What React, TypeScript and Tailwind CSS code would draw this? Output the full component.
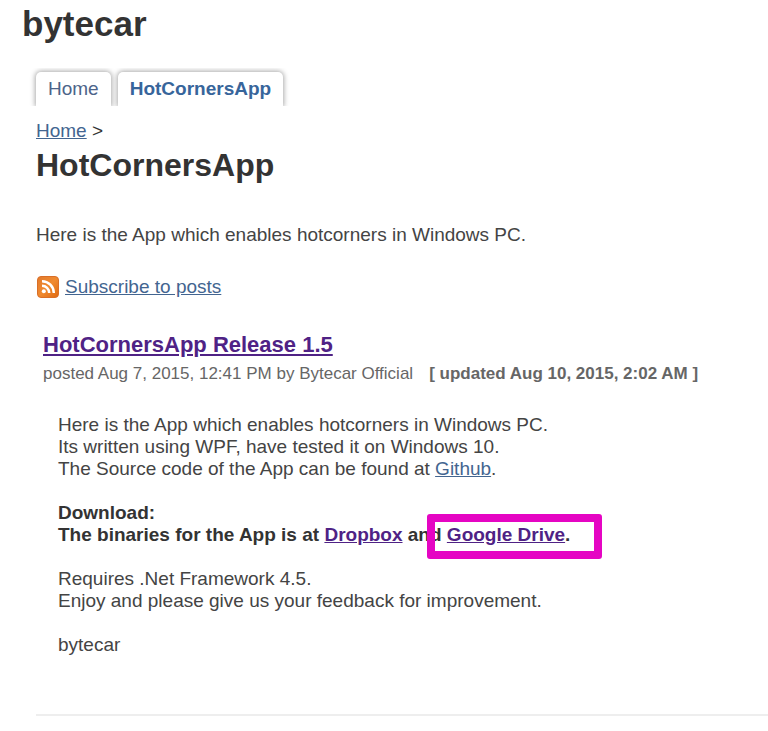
/**
 * Site page for HotCornersApp: site title, tabs, breadcrumb and the announcement post.
 */

import type { ReactNode } from 'react';

interface TextLinkProps {
  href: string;
  visited?: boolean;
  children: ReactNode;
}

function TextLink({ href, visited = false, children }: TextLinkProps) {
  return (
    <a
      href={href}
      className={visited ? 'text-[#4f2285] underline' : 'text-[#436590] underline'}
    >
      {children}
    </a>
  );
}

interface TabProps {
  href: string;
  active?: boolean;
  children: ReactNode;
}

function Tab({ href, active = false, children }: TabProps) {
  return (
    <li>
      <a
        href={href}
        aria-current={active ? 'page' : undefined}
        className={`block h-[34px] rounded-t-[5px] bg-white px-3 pt-[5px] leading-6 shadow-[0_0_5px_1px_#aaa] ${
          active ? 'font-bold text-[#37659b]' : 'text-[#4d6489]'
        }`}
      >
        {children}
      </a>
    </li>
  );
}

function FeedIcon() {
  return (
    <svg viewBox="0 0 22 22" className="h-[22px] w-[22px] shrink-0" aria-hidden="true">
      <defs>
        <linearGradient id="feed" x1="0" y1="0" x2="1" y2="1">
          <stop offset="0" stopColor="#e27a2c" />
          <stop offset="0.5" stopColor="#f08a30" />
          <stop offset="1" stopColor="#e0690f" />
        </linearGradient>
      </defs>
      <rect x="0.5" y="0.5" width="21" height="21" rx="3.5" fill="url(#feed)" stroke="#d96f28" />
      <circle cx="6.8" cy="15.2" r="2" fill="#fff" />
      <path
        d="M5 9.8a7.2 7.2 0 0 1 7.2 7.2M5 5.2A11.8 11.8 0 0 1 16.8 17"
        fill="none"
        stroke="#fff"
        strokeWidth="2.5"
      />
    </svg>
  );
}

function Post() {
  return (
    <article className="px-[7px]">
      <h2 className="text-[22px] leading-7 font-bold">
        <TextLink href="#release" visited>
          HotCornersApp Release 1.5
        </TextLink>
      </h2>
      <p className="mt-[3px] flex flex-wrap gap-x-4 text-[17px] leading-6 text-[#666]">
        <span>posted Aug 7, 2015, 12:41 PM by Bytecar Official</span>
        <strong>[ updated Aug 10, 2015, 2:02 AM ]</strong>
      </p>

      <div className="mt-7 space-y-[22px] pl-[15px]">
        <p>
          Here is the App which enables hotcorners in Windows PC.
          <br />
          Its written using WPF, have tested it on Windows 10.
          <br />
          The Source code of the App can be found at <TextLink href="#github">Github</TextLink>.
        </p>
        <p className="font-bold text-[#333]">
          Download:
          <br />
          The binaries for the App is at{' '}
          <TextLink href="#dropbox" visited>
            Dropbox
          </TextLink>{' '}
          and{' '}
          <span className="relative inline-block">
            <TextLink href="#drive" visited>
              Google Drive
            </TextLink>
            .
            <span className="pointer-events-none absolute -top-[10px] -right-8 -bottom-[13px] -left-5 rounded-[3px] border-8 border-[#e505c3]" />
          </span>
        </p>
        <p>
          Requires .Net Framework 4.5.
          <br />
          Enjoy and please give us your feedback for improvement.
        </p>
        <p>bytecar</p>
      </div>
    </article>
  );
}

export default function App() {
  return (
    <div className="min-h-screen bg-white font-['Liberation_Sans',Arial,sans-serif] text-[19px] leading-[22px] text-[#444]">
      <header className="px-[22px] pt-1">
        <div className="text-[35px] leading-10 font-bold text-[#333]">bytecar</div>
      </header>

      <nav className="mt-6 overflow-hidden pl-9">
        <ul className="flex gap-[7px] pt-1">
          <Tab href="#home">Home</Tab>
          <Tab href="#hotcorners" active>
            HotCornersApp
          </Tab>
        </ul>
      </nav>

      <main className="pl-9">
        <div className="pt-3.5">
          <TextLink href="#home">Home</TextLink> <span className="text-[#333]">&gt;</span>
        </div>
        <h1 className="mt-[3px] text-[32px] leading-10 font-bold text-[#333]">HotCornersApp</h1>
        <p className="mt-[39px]">Here is the App which enables hotcorners in Windows PC.</p>

        <div className="mt-[30px] mb-[33px] flex items-center gap-1.5 pl-px">
          <FeedIcon />
          <TextLink href="#feed">Subscribe to posts</TextLink>
        </div>

        <Post />

        <hr className="mt-[58px] border-t-2 border-[#eee]" />
      </main>
    </div>
  );
}
